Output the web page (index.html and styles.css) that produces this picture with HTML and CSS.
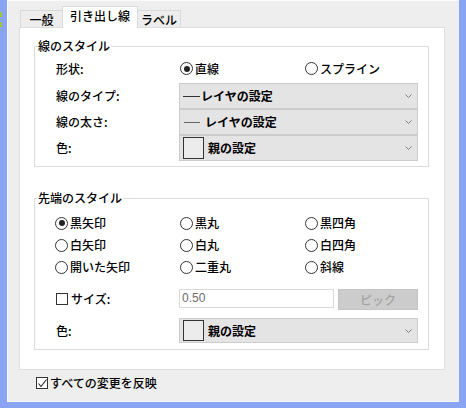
FILE: index.html
```html
<!DOCTYPE html>
<html lang="ja">
<head>
<meta charset="utf-8">
<title>引き出し線</title>
<link rel="stylesheet" href="styles.css">
</head>
<body>
<div class="screen">
  <div class="main">
    <div class="edge edge-left"><i class="mark"></i><i class="mark"></i></div>
    <div class="dialog">
      <div class="tabs">
        <div class="tab t1">一般</div>
        <div class="tab t2 active">引き出し線</div>
        <div class="tab t3">ラベル</div>
      </div>
      <div class="panel">
        <fieldset class="group g1">
          <legend>線のスタイル</legend>
          <div class="grid1">
            <div class="lbl">形状:</div>
            <div class="radios2">
              <span class="radio on"><i class="circle"></i>直線</span>
              <span class="radio"><i class="circle"></i>スプライン</span>
            </div>
            <div class="lbl">線のタイプ:</div>
            <div class="combo">
              <span class="line thick"></span><span class="ctext t-a">レイヤの設定</span>
              <svg class="chev" width="7" height="4" viewBox="0 0 7 4"><polyline points="0.5,0.5 3.5,3.5 6.5,0.5" fill="none" stroke="#808080" stroke-width="1"/></svg>
            </div>
            <div class="lbl">線の太さ:</div>
            <div class="combo">
              <span class="line thin"></span><span class="ctext t-b">レイヤの設定</span>
              <svg class="chev" width="7" height="4" viewBox="0 0 7 4"><polyline points="0.5,0.5 3.5,3.5 6.5,0.5" fill="none" stroke="#808080" stroke-width="1"/></svg>
            </div>
            <div class="lbl">色:</div>
            <div class="combo">
              <span class="swatch"></span><span class="ctext">親の設定</span>
              <svg class="chev" width="7" height="4" viewBox="0 0 7 4"><polyline points="0.5,0.5 3.5,3.5 6.5,0.5" fill="none" stroke="#808080" stroke-width="1"/></svg>
            </div>
          </div>
        </fieldset>

        <fieldset class="group g2">
          <legend>先端のスタイル</legend>
          <div class="radios3">
            <span class="radio on"><i class="circle"></i>黒矢印</span>
            <span class="radio"><i class="circle"></i>黒丸</span>
            <span class="radio"><i class="circle"></i>黒四角</span>
            <span class="radio"><i class="circle"></i>白矢印</span>
            <span class="radio"><i class="circle"></i>白丸</span>
            <span class="radio"><i class="circle"></i>白四角</span>
            <span class="radio"><i class="circle"></i>開いた矢印</span>
            <span class="radio"><i class="circle"></i>二重丸</span>
            <span class="radio"><i class="circle"></i>斜線</span>
          </div>
          <div class="sizerow">
            <span class="check size-check"><i class="box"></i>サイズ:</span>
            <div class="input">0.50</div>
            <div class="button">ピック</div>
          </div>
          <div class="colorrow">
            <div class="lbl">色:</div>
            <div class="combo combo2">
              <span class="swatch"></span><span class="ctext">親の設定</span>
              <svg class="chev" width="7" height="4" viewBox="0 0 7 4"><polyline points="0.5,0.5 3.5,3.5 6.5,0.5" fill="none" stroke="#808080" stroke-width="1"/></svg>
            </div>
          </div>
        </fieldset>
      </div>
      <div class="apply">
        <span class="check"><i class="box checked"><svg width="11" height="11" viewBox="0 0 11 11"><polyline points="1.5,5.5 4,8.5 9.5,1.5" fill="none" stroke="#222" stroke-width="1.1"/></svg></i>すべての変更を反映</span>
      </div>
    </div>
    <div class="edge edge-right"></div>
  </div>
  <div class="edge-bottom"></div>
</div>
</body>
</html>
```

FILE: styles.css
```css
* { box-sizing: border-box; }
html, body { margin: 0; padding: 0; }
body {
  font-family: "Noto Sans CJK JP", "Noto Sans", sans-serif;
  font-size: 12px;
  font-weight: 500;
  line-height: 16px;
  color: #000;
  background: #88a4f2;
}
.screen {
  width: 466px;
  height: 408px;
  display: flex;
  flex-direction: column;
}
.main { flex: 1; display: flex; min-height: 0; }
.edge { width: 7px; background: #88a4f2; }
.edge-left { padding-top: 12px; display: flex; flex-direction: column; gap: 5px; }
.mark { display: block; width: 2px; height: 5px; background: #a2c445; }
.edge-bottom { height: 6px; background: #88a4f2; }

.dialog {
  flex: 1;
  background: #eeeeee;
  border-left: 1px solid #fbfbfb;
  border-top: 1px solid #fbfbfb;
  border-bottom: 1px solid #f8f8f8;
  display: flex;
  flex-direction: column;
}

.tabs {
  display: flex;
  align-items: flex-end;
  margin-left: 12px;
  margin-top: 5px;
  height: 21px;
  position: relative;
  z-index: 1;
}
.tab {
  height: 17px;
  border: 1px solid #d9d9d9;
  border-bottom: none;
  background: #ededed;
  text-align: center;
  line-height: 16px;
  padding-top: 1px;
}
.t1 { width: 43px; margin-right: -1px; }
.t2 { width: 76px; }
.t3 { width: 44px; margin-left: -1px; }
.tab.active {
  height: 22px;
  margin-bottom: -1px;
  background: #fff;
  padding-top: 1px;
  position: relative;
}

.panel {
  margin-left: 11px;
  width: 426px;
  height: 343px;
  background: #fff;
  border: 1px solid #dedede;
  padding: 10px 0 0 14px;
}

.group {
  margin: 0;
  padding: 0;
  width: 395px;
  border: 1px solid #dcdcdc;
  min-width: 0;
}
.group legend {
  margin-left: 2px;
  padding: 0 1px;
  line-height: 16px;
}
.g2 { margin-top: 23px; }

.grid1 {
  display: grid;
  grid-template-columns: 123px 239px;
  grid-template-rows: 29px 26px 26px 26px;
  padding-left: 21px;
  padding-bottom: 5px;
  align-items: center;
}
.lbl { line-height: 16px; }

.radios2 {
  display: grid;
  grid-template-columns: 125px auto;
  padding-left: 1px;
}
.radio {
  display: inline-flex;
  align-items: center;
  gap: 2px;
  white-space: nowrap;
}
.circle {
  display: inline-block;
  width: 13px;
  height: 13px;
  border: 1px solid #333;
  border-radius: 50%;
  background: #fff;
  position: relative;
  flex: none;
}
.radio.on .circle::after {
  content: "";
  position: absolute;
  left: 2.5px;
  top: 2.5px;
  width: 6px;
  height: 6px;
  border-radius: 50%;
  background: #222;
}

.combo {
  height: 26px;
  background: #e4e4e4;
  border: 1px solid #cccccc;
  display: flex;
  align-items: center;
  padding-left: 3px;
}
.combo .ctext { flex: 1; white-space: nowrap; font-weight: 700; }
.chev { margin-right: 5px; flex: none; }
.line { display: inline-block; width: 17px; flex: none; }
.line.thick { border-top: 1.5px solid #333; margin-right: 1px; }
.line.thin { border-top: 1px solid #666; width: 16px; margin-left: 1px; margin-right: 5px; }
.swatch {
  width: 21px;
  height: 22px;
  border: 1px solid #333;
  background: #ececec;
  margin-right: 4px;
  flex: none;
}

.radios3 {
  display: grid;
  grid-template-columns: 125px 125px auto;
  grid-auto-rows: 22px;
  align-items: center;
  padding: 6px 0 0 20px;
}

.sizerow {
  display: grid;
  grid-template-columns: 120px 155px 80px;
  column-gap: 4px;
  align-items: center;
  margin-top: 9px;
  padding-left: 20px;
  height: 21px;
}
.check {
  display: inline-flex;
  align-items: center;
  gap: 3px;
  white-space: nowrap;
}
.size-check { margin-left: 1px; }
.box {
  display: inline-block;
  width: 12px;
  height: 12px;
  border: 1px solid #333;
  background: #fff;
  flex: none;
  position: relative;
}
.box svg { position: absolute; left: -0.5px; top: -0.5px; }
.input {
  height: 19px;
  border: 1px solid #dadada;
  background: #fff;
  color: #6d6d6d;
  font-family: "Liberation Sans", "Noto Sans", sans-serif;
  font-weight: 400;
  font-size: 12px;
  line-height: 17px;
  padding-left: 2px;
}
.button {
  height: 21px;
  margin-top: 2px;
  background: #cccccc;
  border: 1px solid #c4c4c4;
  color: #a3a3a3;
  text-align: center;
  line-height: 19px;
}

.colorrow {
  display: grid;
  grid-template-columns: 123px 239px;
  align-items: center;
  margin-top: 10px;
  padding-left: 21px;
  padding-bottom: 6px;
}
.combo2 { height: 25px; }
.combo2 .swatch { height: 21px; }

.apply {
  margin-top: 5px;
  margin-left: 28px;
  height: 16px;
  display: flex;
  align-items: center;
}
.apply .check { gap: 2px; }
```
